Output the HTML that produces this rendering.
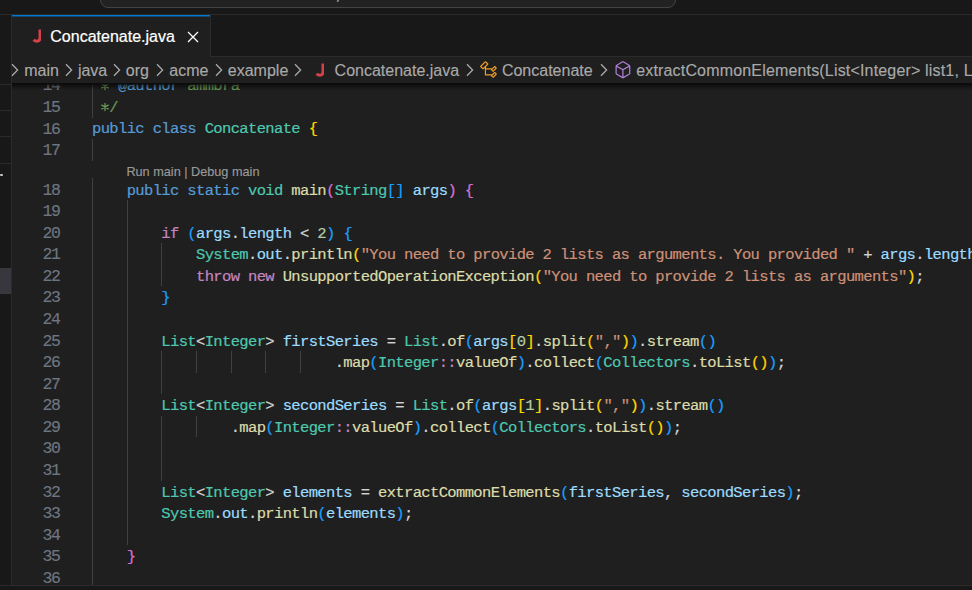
<!DOCTYPE html>
<html><head><meta charset="utf-8">
<style>
html,body{margin:0;padding:0;}
body{width:972px;height:590px;overflow:hidden;background:#181818;position:relative;font-family:"Liberation Sans",sans-serif;}
.abs{position:absolute;}
#titlebar{position:absolute;left:0;top:0;width:972px;height:14px;background:#181818;border-bottom:1px solid #2b2b2b;}
#cc{position:absolute;left:100px;top:-20px;width:573.5px;height:26px;background:#222222;border:1.3px solid #444444;border-radius:8px;}
#sidebar{position:absolute;left:0;top:15px;width:11px;height:570px;background:#181818;border-right:1px solid #2b2b2b;}
.sbl{position:absolute;left:0;width:11px;height:1px;background:#2b2b2b;}
#tabs{position:absolute;left:12px;top:15px;width:960px;height:41px;background:#181818;border-bottom:1px solid #2b2b2b;}
#tab{position:absolute;left:12px;top:15px;width:198px;height:42px;background:#1f1f1f;border-right:1px solid #2b2b2b;}
#tabtop{position:absolute;left:12px;top:15px;width:198px;height:1px;background:#0078d4;box-shadow:0 1px 0 rgba(0,120,212,0.45);}
.tabtitle{position:absolute;left:50.3px;top:27px;font-size:16px;-webkit-text-stroke:0.2px currentColor;line-height:20px;color:#ffffff;white-space:nowrap;}
#editor{position:absolute;left:12px;top:57px;width:960px;height:528px;background:#1f1f1f;overflow:hidden;}
#bottom{position:absolute;left:0;top:585px;width:972px;height:5px;background:#181818;border-top:1px solid #2b2b2b;}
.bc{position:absolute;top:60.8px;font-size:16px;-webkit-text-stroke:0.15px currentColor;line-height:20px;color:#a9a9a9;white-space:nowrap;}
.chev{position:absolute;top:63px;}
#code{position:absolute;left:0;top:0;width:972px;height:585px;overflow:hidden;clip-path:inset(84.5px 0 0 0);}
.ln{position:absolute;left:92.0px;font-family:"Liberation Mono",monospace;font-size:15.5px;letter-spacing:-0.6365px;line-height:21.57px;height:21.57px;color:#D4D4D4;white-space:pre;-webkit-text-stroke:0.2px currentColor;}
.num{position:absolute;left:20px;width:39.8px;margin-top:-0.9px;-webkit-text-stroke:0.15px currentColor;text-align:right;font-family:"Liberation Mono",monospace;font-size:16.5px;letter-spacing:-1.236px;line-height:21.57px;color:#6E7681;white-space:pre;}
.g{position:absolute;width:1px;background:#404040;}
#shadow{position:absolute;left:12px;top:83px;width:960px;height:7px;background:linear-gradient(rgba(0,0,0,0.7),rgba(0,0,0,0));}
#crumbbar{position:absolute;left:12px;top:57px;width:960px;height:26px;background:#1f1f1f;}
.lens{position:absolute;left:126.4px;top:164.1px;font-size:12.7px;-webkit-text-stroke:0.15px currentColor;line-height:16px;color:#999999;white-space:nowrap;}
</style></head><body>
<div id="titlebar"></div>
<div id="cc"></div>
<div class="abs" style="left:337px;top:-1px;width:2.4px;height:3.2px;background:#8a8a8a;border-radius:1px;transform:skewX(-20deg)"></div>
<div id="sidebar"></div>
<div class="sbl" style="top:84px"></div>
<div class="sbl" style="top:110px"></div>
<div class="sbl" style="top:136px"></div>
<div class="sbl" style="top:163px"></div>
<div class="abs" style="left:0;top:174px;width:3px;height:2px;background:#cccccc;border-radius:1px"></div>
<div class="abs" style="left:0;top:268px;width:11px;height:26px;background:#37373d"></div>
<div id="tabs"></div>
<div id="editor"></div>
<div id="tab"></div>
<div id="tabtop"></div>
<div class="abs" style="left:30.5px;top:29px"><svg width="10" height="14" viewBox="0 0 10 14" style="display:block"><path d="M8.95 0.4 V9.3 Q8.95 12.2 6 12.2 Q3.9 12.2 2.6 10.8" fill="none" stroke="#d4414a" stroke-width="2.9"/></svg></div>
<div class="tabtitle">Concatenate.java</div>
<svg class="abs" style="left:187px;top:30.5px" width="12" height="12" viewBox="0 0 12 12"><path d="M1 1 L11 11 M11 1 L1 11" stroke="#ffffff" stroke-width="1.3"/></svg>
<div id="code">
<div class="g" style="left:92.00px;top:74.10px;height:21.87px"></div>
<div class="g" style="left:92.00px;top:95.67px;height:21.87px"></div>
<div class="g" style="left:92.00px;top:138.81px;height:21.87px"></div>
<div class="g" style="left:92.00px;top:178.34px;height:21.87px"></div>
<div class="g" style="left:92.00px;top:199.91px;height:21.87px"></div>
<div class="g" style="left:126.66px;top:199.91px;height:21.87px"></div>
<div class="g" style="left:92.00px;top:221.48px;height:21.87px"></div>
<div class="g" style="left:126.66px;top:221.48px;height:21.87px"></div>
<div class="g" style="left:92.00px;top:243.05px;height:21.87px"></div>
<div class="g" style="left:126.66px;top:243.05px;height:21.87px"></div>
<div class="g" style="left:161.32px;top:243.05px;height:21.87px"></div>
<div class="g" style="left:92.00px;top:264.62px;height:21.87px"></div>
<div class="g" style="left:126.66px;top:264.62px;height:21.87px"></div>
<div class="g" style="left:161.32px;top:264.62px;height:21.87px"></div>
<div class="g" style="left:92.00px;top:286.19px;height:21.87px"></div>
<div class="g" style="left:126.66px;top:286.19px;height:21.87px"></div>
<div class="g" style="left:92.00px;top:307.76px;height:21.87px"></div>
<div class="g" style="left:126.66px;top:307.76px;height:21.87px"></div>
<div class="g" style="left:92.00px;top:329.33px;height:21.87px"></div>
<div class="g" style="left:126.66px;top:329.33px;height:21.87px"></div>
<div class="g" style="left:92.00px;top:350.90px;height:21.87px"></div>
<div class="g" style="left:126.66px;top:350.90px;height:21.87px"></div>
<div class="g" style="left:161.32px;top:350.90px;height:21.87px"></div>
<div class="g" style="left:195.98px;top:350.90px;height:21.87px"></div>
<div class="g" style="left:230.64px;top:350.90px;height:21.87px"></div>
<div class="g" style="left:265.30px;top:350.90px;height:21.87px"></div>
<div class="g" style="left:299.96px;top:350.90px;height:21.87px"></div>
<div class="g" style="left:92.00px;top:372.47px;height:21.87px"></div>
<div class="g" style="left:126.66px;top:372.47px;height:21.87px"></div>
<div class="g" style="left:161.32px;top:372.47px;height:21.87px"></div>
<div class="g" style="left:92.00px;top:394.04px;height:21.87px"></div>
<div class="g" style="left:126.66px;top:394.04px;height:21.87px"></div>
<div class="g" style="left:92.00px;top:415.61px;height:21.87px"></div>
<div class="g" style="left:126.66px;top:415.61px;height:21.87px"></div>
<div class="g" style="left:161.32px;top:415.61px;height:21.87px"></div>
<div class="g" style="left:195.98px;top:415.61px;height:21.87px"></div>
<div class="g" style="left:92.00px;top:437.18px;height:21.87px"></div>
<div class="g" style="left:126.66px;top:437.18px;height:21.87px"></div>
<div class="g" style="left:161.32px;top:437.18px;height:21.87px"></div>
<div class="g" style="left:92.00px;top:458.75px;height:21.87px"></div>
<div class="g" style="left:126.66px;top:458.75px;height:21.87px"></div>
<div class="g" style="left:161.32px;top:458.75px;height:21.87px"></div>
<div class="g" style="left:92.00px;top:480.32px;height:21.87px"></div>
<div class="g" style="left:126.66px;top:480.32px;height:21.87px"></div>
<div class="g" style="left:92.00px;top:501.89px;height:21.87px"></div>
<div class="g" style="left:126.66px;top:501.89px;height:21.87px"></div>
<div class="g" style="left:92.00px;top:523.46px;height:21.87px"></div>
<div class="g" style="left:126.66px;top:523.46px;height:21.87px"></div>
<div class="g" style="left:92.00px;top:545.03px;height:21.87px"></div>
<div class="g" style="left:92.00px;top:566.60px;height:21.87px"></div>
<div class="num" style="top:76.30px">14</div>
<div class="num" style="top:97.87px">15</div>
<div class="num" style="top:119.44px">16</div>
<div class="num" style="top:141.01px">17</div>
<div class="num" style="top:180.54px">18</div>
<div class="num" style="top:202.11px">19</div>
<div class="num" style="top:223.68px">20</div>
<div class="num" style="top:245.25px">21</div>
<div class="num" style="top:266.82px">22</div>
<div class="num" style="top:288.39px">23</div>
<div class="num" style="top:309.96px">24</div>
<div class="num" style="top:331.53px">25</div>
<div class="num" style="top:353.10px">26</div>
<div class="num" style="top:374.67px">27</div>
<div class="num" style="top:396.24px">28</div>
<div class="num" style="top:417.81px">29</div>
<div class="num" style="top:439.38px">30</div>
<div class="num" style="top:460.95px">31</div>
<div class="num" style="top:482.52px">32</div>
<div class="num" style="top:504.09px">33</div>
<div class="num" style="top:525.66px">34</div>
<div class="num" style="top:547.23px">35</div>
<div class="num" style="top:568.80px">36</div>
<svg class="abs" style="left:99.70px;top:80.80px" width="10" height="10" viewBox="-5 -5 10 10"><g stroke="#6A9955" stroke-width="1.25" stroke-linecap="round"><path d="M0 -3.6V3.6M-3.2 -1.85L3.2 1.85M-3.2 1.85L3.2 -1.85"/></g></svg>
<svg class="abs" style="left:99.70px;top:102.37px" width="10" height="10" viewBox="-5 -5 10 10"><g stroke="#6A9955" stroke-width="1.25" stroke-linecap="round"><path d="M0 -3.6V3.6M-3.2 -1.85L3.2 1.85M-3.2 1.85L3.2 -1.85"/></g></svg>
<div class="ln" style="top:76.30px"><span style="color:#6A9955">   </span><span style="color:#569CD6">@author</span><span style="color:#6A9955"> ammbra</span></div>
<div class="ln" style="top:97.87px"><span style="color:#6A9955">  /</span></div>
<div class="ln" style="top:119.44px"><span style="color:#569CD6">public</span> <span style="color:#569CD6">class</span> <span style="color:#4EC9B0">Concatenate</span> <span style="color:#FFD700">{</span></div>
<div class="ln" style="top:141.01px"></div>
<div class="ln" style="top:180.54px">    <span style="color:#569CD6">public</span> <span style="color:#569CD6">static</span> <span style="color:#4EC9B0">void</span> <span style="color:#DCDCAA">main</span><span style="color:#DA70D6">(</span><span style="color:#4EC9B0">String</span><span style="color:#179FFF">[]</span> <span style="color:#9CDCFE">args</span><span style="color:#DA70D6">)</span> <span style="color:#DA70D6">{</span></div>
<div class="ln" style="top:202.11px"></div>
<div class="ln" style="top:223.68px">        <span style="color:#C586C0">if</span> <span style="color:#179FFF">(</span><span style="color:#9CDCFE">args</span><span style="color:#D4D4D4">.</span><span style="color:#9CDCFE">length</span><span style="color:#D4D4D4"> &lt; </span><span style="color:#B5CEA8">2</span><span style="color:#179FFF">)</span> <span style="color:#179FFF">{</span></div>
<div class="ln" style="top:245.25px">            <span style="color:#4EC9B0">System</span><span style="color:#D4D4D4">.</span><span style="color:#9CDCFE">out</span><span style="color:#D4D4D4">.</span><span style="color:#DCDCAA">println</span><span style="color:#FFD700">(</span><span style="color:#CE9178">"You need to provide 2 lists as arguments. You provided "</span><span style="color:#D4D4D4"> + </span><span style="color:#9CDCFE">args</span><span style="color:#D4D4D4">.</span><span style="color:#9CDCFE">length</span></div>
<div class="ln" style="top:266.82px">            <span style="color:#C586C0">throw</span> <span style="color:#C586C0">new</span> <span style="color:#DCDCAA">UnsupportedOperationException</span><span style="color:#FFD700">(</span><span style="color:#CE9178">"You need to provide 2 lists as arguments"</span><span style="color:#FFD700">)</span><span style="color:#D4D4D4">;</span></div>
<div class="ln" style="top:288.39px">        <span style="color:#179FFF">}</span></div>
<div class="ln" style="top:309.96px"></div>
<div class="ln" style="top:331.53px">        <span style="color:#4EC9B0">List</span><span style="color:#D4D4D4">&lt;</span><span style="color:#4EC9B0">Integer</span><span style="color:#D4D4D4">&gt;</span> <span style="color:#9CDCFE">firstSeries</span><span style="color:#D4D4D4"> = </span><span style="color:#4EC9B0">List</span><span style="color:#D4D4D4">.</span><span style="color:#DCDCAA">of</span><span style="color:#179FFF">(</span><span style="color:#9CDCFE">args</span><span style="color:#FFD700">[</span><span style="color:#B5CEA8">0</span><span style="color:#FFD700">]</span><span style="color:#D4D4D4">.</span><span style="color:#DCDCAA">split</span><span style="color:#FFD700">(</span><span style="color:#CE9178">","</span><span style="color:#FFD700">)</span><span style="color:#179FFF">)</span><span style="color:#D4D4D4">.</span><span style="color:#DCDCAA">stream</span><span style="color:#179FFF">()</span></div>
<div class="ln" style="top:353.10px">                            <span style="color:#D4D4D4">.</span><span style="color:#DCDCAA">map</span><span style="color:#179FFF">(</span><span style="color:#4EC9B0">Integer</span><span style="color:#C586C0">::</span><span style="color:#DCDCAA">valueOf</span><span style="color:#179FFF">)</span><span style="color:#D4D4D4">.</span><span style="color:#DCDCAA">collect</span><span style="color:#179FFF">(</span><span style="color:#4EC9B0">Collectors</span><span style="color:#D4D4D4">.</span><span style="color:#DCDCAA">toList</span><span style="color:#FFD700">()</span><span style="color:#179FFF">)</span><span style="color:#D4D4D4">;</span></div>
<div class="ln" style="top:374.67px"></div>
<div class="ln" style="top:396.24px">        <span style="color:#4EC9B0">List</span><span style="color:#D4D4D4">&lt;</span><span style="color:#4EC9B0">Integer</span><span style="color:#D4D4D4">&gt;</span> <span style="color:#9CDCFE">secondSeries</span><span style="color:#D4D4D4"> = </span><span style="color:#4EC9B0">List</span><span style="color:#D4D4D4">.</span><span style="color:#DCDCAA">of</span><span style="color:#179FFF">(</span><span style="color:#9CDCFE">args</span><span style="color:#FFD700">[</span><span style="color:#B5CEA8">1</span><span style="color:#FFD700">]</span><span style="color:#D4D4D4">.</span><span style="color:#DCDCAA">split</span><span style="color:#FFD700">(</span><span style="color:#CE9178">","</span><span style="color:#FFD700">)</span><span style="color:#179FFF">)</span><span style="color:#D4D4D4">.</span><span style="color:#DCDCAA">stream</span><span style="color:#179FFF">()</span></div>
<div class="ln" style="top:417.81px">                <span style="color:#D4D4D4">.</span><span style="color:#DCDCAA">map</span><span style="color:#179FFF">(</span><span style="color:#4EC9B0">Integer</span><span style="color:#C586C0">::</span><span style="color:#DCDCAA">valueOf</span><span style="color:#179FFF">)</span><span style="color:#D4D4D4">.</span><span style="color:#DCDCAA">collect</span><span style="color:#179FFF">(</span><span style="color:#4EC9B0">Collectors</span><span style="color:#D4D4D4">.</span><span style="color:#DCDCAA">toList</span><span style="color:#FFD700">()</span><span style="color:#179FFF">)</span><span style="color:#D4D4D4">;</span></div>
<div class="ln" style="top:439.38px"></div>
<div class="ln" style="top:460.95px"></div>
<div class="ln" style="top:482.52px">        <span style="color:#4EC9B0">List</span><span style="color:#D4D4D4">&lt;</span><span style="color:#4EC9B0">Integer</span><span style="color:#D4D4D4">&gt;</span> <span style="color:#9CDCFE">elements</span><span style="color:#D4D4D4"> = </span><span style="color:#DCDCAA">extractCommonElements</span><span style="color:#179FFF">(</span><span style="color:#9CDCFE">firstSeries</span><span style="color:#D4D4D4">, </span><span style="color:#9CDCFE">secondSeries</span><span style="color:#179FFF">)</span><span style="color:#D4D4D4">;</span></div>
<div class="ln" style="top:504.09px">        <span style="color:#4EC9B0">System</span><span style="color:#D4D4D4">.</span><span style="color:#9CDCFE">out</span><span style="color:#D4D4D4">.</span><span style="color:#DCDCAA">println</span><span style="color:#179FFF">(</span><span style="color:#9CDCFE">elements</span><span style="color:#179FFF">)</span><span style="color:#D4D4D4">;</span></div>
<div class="ln" style="top:525.66px"></div>
<div class="ln" style="top:547.23px">    <span style="color:#DA70D6">}</span></div>
<div class="ln" style="top:568.80px"></div>
<div class="lens">Run main | Debug main</div>
</div>
<div id="shadow"></div>
<div id="crumbbar"></div>
<svg class="chev" style="left:10.7px" width="8" height="14" viewBox="0 0 8 14"><path d="M1 1.2 L6.6 7 L1 12.8" fill="none" stroke="#a9a9a9" stroke-width="1.3"/></svg>
<div class="bc" style="left:24.2px">main</div>
<svg class="chev" style="left:65.0px" width="8" height="14" viewBox="0 0 8 14"><path d="M1 1.2 L6.6 7 L1 12.8" fill="none" stroke="#a9a9a9" stroke-width="1.3"/></svg>
<div class="bc" style="left:77.9px">java</div>
<svg class="chev" style="left:112.6px" width="8" height="14" viewBox="0 0 8 14"><path d="M1 1.2 L6.6 7 L1 12.8" fill="none" stroke="#a9a9a9" stroke-width="1.3"/></svg>
<div class="bc" style="left:125.8px">org</div>
<svg class="chev" style="left:156.2px" width="8" height="14" viewBox="0 0 8 14"><path d="M1 1.2 L6.6 7 L1 12.8" fill="none" stroke="#a9a9a9" stroke-width="1.3"/></svg>
<div class="bc" style="left:169.3px">acme</div>
<svg class="chev" style="left:214.8px" width="8" height="14" viewBox="0 0 8 14"><path d="M1 1.2 L6.6 7 L1 12.8" fill="none" stroke="#a9a9a9" stroke-width="1.3"/></svg>
<div class="bc" style="left:227.8px">example</div>
<svg class="chev" style="left:294.2px" width="8" height="14" viewBox="0 0 8 14"><path d="M1 1.2 L6.6 7 L1 12.8" fill="none" stroke="#a9a9a9" stroke-width="1.3"/></svg>
<div style="position:absolute;left:313.5px;top:62.8px"><svg width="10" height="14" viewBox="0 0 10 14" style="display:block"><path d="M8.95 0.4 V9.3 Q8.95 12.2 6 12.2 Q3.9 12.2 2.6 10.8" fill="none" stroke="#d4414a" stroke-width="2.9"/></svg></div>
<div class="bc" style="left:334.6px">Concatenate.java</div>
<svg class="chev" style="left:466.0px" width="8" height="14" viewBox="0 0 8 14"><path d="M1 1.2 L6.6 7 L1 12.8" fill="none" stroke="#a9a9a9" stroke-width="1.3"/></svg>
<svg style="position:absolute;left:479.0px;top:60.0px" width="19.3" height="19.3" viewBox="0 0 16 16"><path d="M11.34 9.71h.71l2.67-2.67v-.71L13.38 5h-.7l-1.82 1.81h-5V5.56l1.86-1.85V3l-2-2H5L1 5v.71l2 2h.71l1.14-1.15v5.79l.5.5H10v.52l1.33 1.34h.71l2.67-2.67v-.71L13.37 10h-.7l-1.86 1.85h-5v-4H10v.48l1.34 1.38zm1.69-3.65.63.63-2 2-.63-.63 2-2zm0 5 .63.63-2 2-.63-.63 2-2zM3.350 6.65 2.06 5.36l3.29-3.29 1.29 1.29-3.29 3.290z" fill="#EE9D28"/></svg>
<div class="bc" style="left:501.9px">Concatenate</div>
<svg class="chev" style="left:600.2px" width="8" height="14" viewBox="0 0 8 14"><path d="M1 1.2 L6.6 7 L1 12.8" fill="none" stroke="#a9a9a9" stroke-width="1.3"/></svg>
<svg style="position:absolute;left:612.8px;top:60.3px" width="19.8" height="19.8" viewBox="0 0 16 16"><path d="M13.51 4l-5-3h-1l-5 3-.49.86v6l.49.85 5 3h1l5-3 .49-.85v-6L13.51 4zm-6 9.56l-4.5-2.7V5.7l4.5 2.450v5.41zM3.27 4.7l4.74-2.84 4.74 2.84-4.74 2.59L3.27 4.7zm9.74 6.16l-4.5 2.7V8.15l4.5-2.45v5.16z" fill="#B180D7"/></svg>
<div class="bc" style="left:636.2px;letter-spacing:0.17px">extractCommonElements(List&lt;Integer&gt; list1, List&lt;Integer&gt; list2)</div>
<div id="bottom"></div>
</body></html>
